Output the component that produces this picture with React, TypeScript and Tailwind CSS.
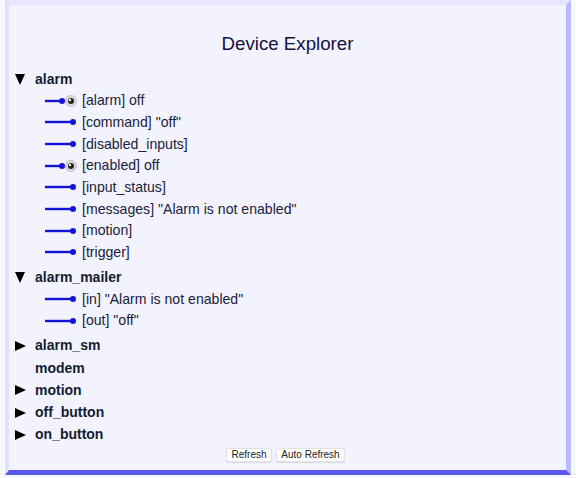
const ROW = "flex h-[21.67px] items-center text-[14.1px] text-[#1a2238]";

function Wire({ eye }: { eye?: boolean }) {
  return (
    <svg width="38" height="22" viewBox="0 0 38 22" className="shrink-0">
      <line x1="1" y1="11" x2={eye ? 18 : 29} y2="11" stroke="#1414d8" strokeWidth="2.4" />
      <circle cx={eye ? 18 : 29} cy="11" r="3" fill="#1414d8" />
      {eye && (
        <g>
          <circle cx="27" cy="11" r="5.5" fill="#dcdcdc" stroke="#c4c4c4" strokeWidth="1" />
          <circle cx="27" cy="11" r="3" fill="#222222" />
          <circle cx="26" cy="10" r="1.2" fill="#eeeeee" />
        </g>
      )}
    </svg>
  );
}

function Port({ label, eye }: { label: string; eye?: boolean }) {
  return (
    <div className={ROW}>
      <div className="ml-[35px] w-[38px]">
        <Wire eye={eye} />
      </div>
      <span>{label}</span>
    </div>
  );
}

function Head({ name, arrow, tall }: { name: string; arrow?: "down" | "right"; tall?: boolean }) {
  return (
    <div className={`flex items-center text-[14px] font-bold text-[#141c30] ${tall ? "h-[22.25px]" : "h-[22px]"}`}>
      <div className="flex w-[26px] justify-center pr-[4px]">
        {arrow === "down" && <span className="h-0 w-0 border-x-[5.5px] border-t-[11px] border-x-transparent border-t-black" />}
        {arrow === "right" && <span className="h-0 w-0 border-y-[5.5px] border-l-[11px] border-y-transparent border-l-black" />}
      </div>
      <span>{name}</span>
    </div>
  );
}

export default function App() {
  return (
    <div className="h-[478px] w-[576px] bg-[#f8f8ff] pl-[5px] font-['Liberation_Sans',Arial,sans-serif]">
      <div className="flex h-[475px] w-[566px] flex-col border-y-[5px] border-r-[5px] border-l-[4px] border-t-[#e6e6ff] border-r-[#b9b9ff] border-b-[#5a5aee] border-l-[#e0e0fc] bg-[#f3f3ff]">
        <h1 className="mt-[24px] text-center text-[18.7px] leading-[30px] text-[#12123c]">Device Explorer</h1>
        <div className="mt-[9px]">
          <Head name="alarm" arrow="down" />
          <Port label="[alarm] off" eye />
          <Port label={'[command] "off"'} />
          <Port label="[disabled_inputs]" />
          <Port label="[enabled] off" eye />
          <Port label="[input_status]" />
          <Port label={'[messages] "Alarm is not enabled"'} />
          <Port label="[motion]" />
          <Port label="[trigger]" />
          <div className="h-[3.2px]" />
          <Head name="alarm_mailer" arrow="down" />
          <Port label={'[in] "Alarm is not enabled"'} />
          <Port label={'[out] "off"'} />
          <div className="h-[3px]" />
          <Head name="alarm_sm" arrow="right" tall />
          <Head name="modem" tall />
          <Head name="motion" arrow="right" tall />
          <Head name="off_button" arrow="right" tall />
          <Head name="on_button" arrow="right" tall />
        </div>
        <div className="mt-[2px] flex justify-center gap-[4px] pr-[4px]">
          <button className="h-[14px] w-[46px] rounded-[3px] border border-[#e2e2e2] bg-white text-[10px] leading-[12px] text-[#222222] shadow-[0_1px_1px_rgba(0,0,0,0.1)]">Refresh</button>
          <button className="h-[14px] w-[69px] rounded-[3px] border border-[#e2e2e2] bg-white text-[10px] leading-[12px] text-[#222222] shadow-[0_1px_1px_rgba(0,0,0,0.1)]">Auto Refresh</button>
        </div>
      </div>
    </div>
  );
}
